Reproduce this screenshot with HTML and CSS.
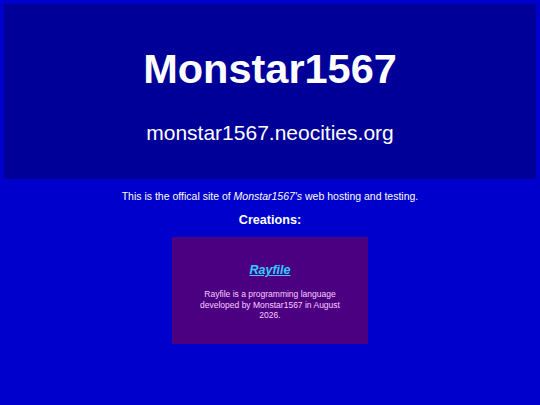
FILE: index.html
```html
<!DOCTYPE html>
<html>
<head>
<meta charset="utf-8">
<title>Monstar1567</title>
<link rel="stylesheet" href="styles.css">
</head>
<body>
<header class="header">
  <h1 class="title">Monstar1567</h1>
  <p class="subtitle">monstar1567.neocities.org</p>
</header>
<main class="main">
  <p class="intro">This is the offical site of <em>Monstar1567's</em> web hosting and testing.</p>
  <h2 class="section-title">Creations:</h2>
  <div class="card">
    <h3 class="card-title"><a href="#">Rayfile</a></h3>
    <p class="card-text">Rayfile is a programming language developed by Monstar1567 in August 2026.</p>
  </div>
</main>
</body>
</html>
```

FILE: styles.css
```css
html, body {
  margin: 0;
  background: #0000cc;
}
body {
  padding: 4px;
  font-family: "Liberation Sans", Arial, sans-serif;
  color: #ffffff;
  text-align: center;
}
.header {
  background: #000099;
  padding: 41px 0 34px;
}
.title {
  margin: 0;
  font-size: 41.5px;
  line-height: 48px;
  font-weight: bold;
}
.subtitle {
  margin: 28px 0 0;
  font-size: 21px;
  line-height: 24px;
}
.main {
  display: flex;
  flex-direction: column;
  align-items: center;
}
.intro {
  margin: 10px 0 0;
  font-size: 10.5px;
  line-height: 14px;
}
.section-title {
  margin: 10px 0 0;
  font-size: 12.6px;
  line-height: 15px;
}
.card {
  margin-top: 9px;
  width: 146px;
  padding: 26px 25px 23px;
  background: #4b0082;
  display: flex;
  flex-direction: column;
  align-items: center;
}
.card-title {
  margin: 0;
  font-size: 12.5px;
  line-height: 15px;
  font-style: italic;
  font-weight: bold;
}
.card-title a {
  color: #33ccff;
}
.card-text {
  margin: 11px 0 0;
  font-size: 8.5px;
  line-height: 10.5px;
  color: #ffccff;
}
```
